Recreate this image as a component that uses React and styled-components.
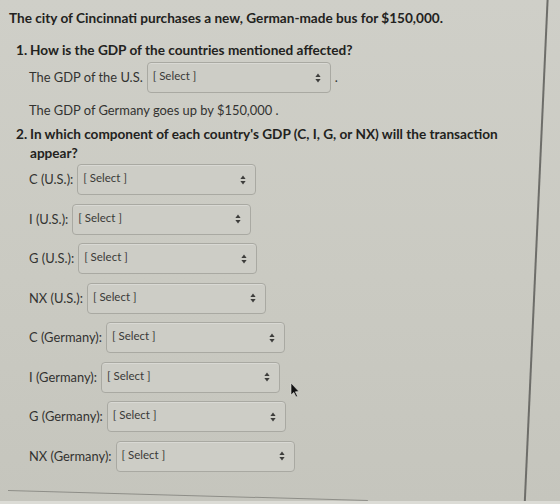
import styled, { createGlobalStyle } from 'styled-components'

const GlobalStyle = createGlobalStyle`
  html, body {
    margin: 0;
    padding: 0;
    background: #c8c8c0;
  }
  body {
    font-family: Lato, "Open Sans", sans-serif;
    color: #2c2c2a;
  }
`

const Screen = styled.div`
  position: relative;
  width: 560px;
  height: 504px;
  overflow: hidden;
  background: linear-gradient(180deg, #cfcfc8 0%, #cacac2 55%, #c5c5bd 100%);
`

// right edge of the quiz panel, a thin dark rule running slightly off-vertical
const PanelEdge = styled.div`
  position: absolute;
  top: -10px;
  left: 535px;
  width: 1.5px;
  height: 530px;
  background: #6d6d69;
  transform: rotate(2.6deg);
  transform-origin: center;
`

const BottomRule = styled.div`
  position: absolute;
  left: 8px;
  top: 490px;
  width: 360px;
  height: 1px;
  background: #8e8e88;
  transform: rotate(1.6deg);
  transform-origin: left center;
`

const BottomStrip = styled.div`
  position: absolute;
  left: 0;
  right: 0;
  bottom: 0;
  height: 3px;
  background: #dcdcd6;
`

const Panel = styled.div`
  padding: 9px 0 0 9px;
  width: 510px;
`

const Title = styled.p`
  margin: 0;
  font-size: 13.6px;
  font-weight: 700;
  line-height: 19px;
  color: #222220;
`

const Question = styled.div`
  display: flex;
  margin-top: ${p => p.$gap}px;
  padding-left: 7px;
`

const Number = styled.span`
  flex: 0 0 14px;
  font-size: 13.6px;
  font-weight: 700;
  line-height: 19px;
  color: #222220;
`

const Body = styled.div`
  flex: 1;
  display: flex;
  flex-direction: column;
`

const Prompt = styled.p`
  margin: 0;
  width: 480px;
  font-size: 13.6px;
  font-weight: 700;
  line-height: 19px;
  color: #222220;
`

const Row = styled.div`
  display: flex;
  align-items: center;
  gap: 4px;
  margin-top: ${p => p.$gap}px;
  margin-left: -1px;
  font-size: 12.9px;
  line-height: 19px;
  color: #333331;
`

const Line = styled.p`
  margin: ${p => p.$gap}px 0 0 -1px;
  font-size: 12.9px;
  line-height: 19px;
  color: #333331;
`

const Select = styled.div`
  display: flex;
  align-items: center;
  justify-content: space-between;
  box-sizing: border-box;
  width: ${p => p.$width}px;
  height: 31px;
  padding: 0 9px 0 5px;
  border: 1px solid #a9a9a2;
  border-radius: 4px;
  background: #cdcdc6;
  box-shadow: inset 0 1px 0 rgba(255, 255, 255, 0.25);
  font-size: 11.5px;
  color: #3a3a38;
`

const Placeholder = styled.span`
  position: relative;
  top: -2px;
`

const Stepper = () => (
  <svg width="6" height="10" viewBox="0 0 6 10">
    <path d="M3 0.5 L5.6 4 L0.4 4 Z" fill="#3d3d3b" />
    <path d="M3 9.5 L5.6 6 L0.4 6 Z" fill="#3d3d3b" />
  </svg>
)

const Pointer = styled.svg`
  position: absolute;
  left: 290px;
  top: 382px;
`

function Dropdown({ width = 179 }) {
  return (
    <Select $width={width}>
      <Placeholder>[ Select ]</Placeholder>
      <Stepper />
    </Select>
  )
}

const components = [
  'C (U.S.):',
  'I (U.S.):',
  'G (U.S.):',
  'NX (U.S.):',
  'C (Germany):',
  'I (Germany):',
  'G (Germany):',
  'NX (Germany):',
]

export default function App() {
  return (
    <Screen>
      <GlobalStyle />
      <Panel>
        <Title>The city of Cincinnati purchases a new, German-made bus for $150,000.</Title>

        <Question $gap={13}>
          <Number>1.</Number>
          <Body>
            <Prompt>How is the GDP of the countries mentioned affected?</Prompt>
            <Row $gap={2}>
              The GDP of the U.S.
              <Dropdown width={184} />
              .
            </Row>
            <Line $gap={8}>The GDP of Germany goes up by $150,000 .</Line>
          </Body>
        </Question>

        <Question $gap={5}>
          <Number>2.</Number>
          <Body>
            <Prompt>
              In which component of each country's GDP (C, I, G, or NX) will the transaction appear?
            </Prompt>
            {components.map((label, i) => (
              <Row key={label} $gap={i === 0 ? 1 : 8.5}>
                {label}
                <Dropdown />
              </Row>
            ))}
          </Body>
        </Question>
      </Panel>

      <Pointer width="10" height="16" viewBox="0 0 10 16">
        <path d="M1 1 L1 13 L3.8 10.4 L6 15 L7.6 14.2 L5.4 9.8 L9 9.6 Z" fill="#111" stroke="#e8e8e2" strokeWidth="0.6" />
      </Pointer>

      <PanelEdge />
      <BottomRule />
      <BottomStrip />
    </Screen>
  )
}
